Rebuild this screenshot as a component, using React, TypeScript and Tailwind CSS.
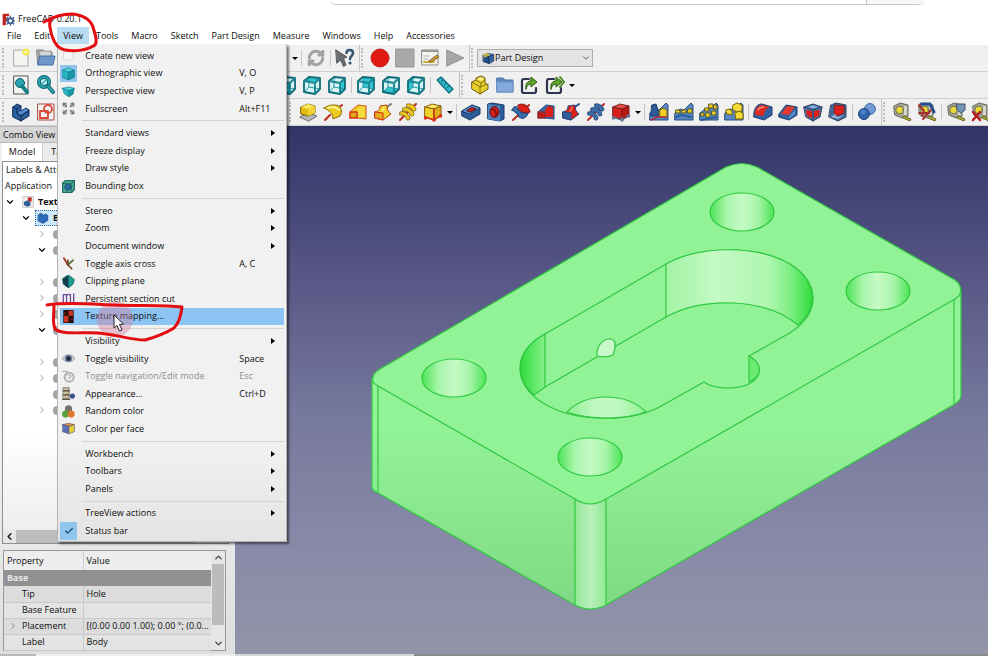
import type { ReactNode } from "react";
import { Check, ChevronDown, ChevronLeft, ChevronRight, ChevronUp, RefreshCw } from "lucide-react";

interface IconProps {
  children: ReactNode;
  size?: string;
}

const Icon = ({ children, size = "h-5 w-5" }: IconProps) => (
  <svg viewBox="0 0 20 20" className={`${size} shrink-0`} strokeLinejoin="round" strokeLinecap="round" fill="none">
    {children}
  </svg>
);

interface BoxProps {
  top: string;
  left: string;
  right: string;
  line: string;
}

const Box = ({ top, left, right, line }: BoxProps) => (
  <g stroke={line}>
    <path d="M2 5 L9 2 L18 4 L11 7 Z" fill={top} />
    <path d="M2 5 L11 7 L11 18 L2 15 Z" fill={left} />
    <path d="M11 7 L18 4 L18 14 L11 18 Z" fill={right} />
  </g>
);

const NewIcon = () => (
  <Icon>
    <path d="M3 2 H17 V18 H3 Z" fill="#f3f3f0" stroke="#a8a8a6" />
    <circle cx="15" cy="4" r="3.5" fill="#f4e64a" />
    <circle cx="15" cy="4" r="1.5" fill="#fffbc0" />
  </Icon>
);

const OpenIcon = () => (
  <Icon>
    <path d="M1 2 H7 L9 4 H16 V16 H2 Z" fill="#a9a9a7" stroke="#7f7f7d" />
    <path d="M4 3 H15 V9 H4 Z" fill="#d5d5d5" stroke="#999" />
    <path d="M4 8 H19 L17 17 H2 Z" fill="#6f97ca" stroke="#456fa6" />
  </Icon>
);

const PointerHelpIcon = () => (
  <Icon>
    <path d="M1 2 L12 9 L8.500 10.500 L11 17 L8.500 18.500 L5.500 12 L2 15 Z" fill="#6b6e70" stroke="#55585a" />
    <path d="M11.500 5 C11.500 1 18 1 18 5 C18 8 15 8 15 11" stroke="#33536f" strokeWidth="2.500" />
    <circle cx="15" cy="15" r="1.600" fill="#33536f" />
  </Icon>
);

const MacroEditIcon = () => (
  <Icon>
    <path d="M2 2 H18 V17 H2 Z" fill="#f2f2ee" stroke="#8b8b88" />
    <path d="M2 2 H18 V4 H2 Z" fill="#9c9a92" />
    <path d="M4 8 H9 M4 11 H8" stroke="#b0b0ae" />
    <path d="M4 14 H14" stroke="#c9b23a" strokeWidth="2" />
    <path d="M9 13 L17 7 L19 9 L11 14 Z" fill="#dba03a" stroke="#7b5a1e" />
  </Icon>
);

const FitAllIcon = () => (
  <Icon>
    <path d="M3 1 H17 V19 H3 Z" fill="#f4f4f2" stroke="#555" />
    <circle cx="9" cy="8" r="4.500" fill="#2aa7b0" stroke="#0c5c66" />
    <path d="M11 11 L16 17" stroke="#16808a" strokeWidth="4" />
  </Icon>
);

const ZoomIcon = () => (
  <Icon>
    <circle cx="8" cy="7" r="5" stroke="#0d6570" strokeWidth="4" fill="#d7f2f3" />
    <circle cx="8" cy="7" r="5" stroke="#29a5b0" strokeWidth="2" />
    <path d="M12 11 L17 17" stroke="#0d6570" strokeWidth="4" />
    <path d="M12 11 L17 17" stroke="#29a5b0" strokeWidth="2" />
    <path d="M6 9 L10 5" stroke="#29a5b0" strokeWidth="1.500" />
  </Icon>
);

const cubeFaces = {
  front: "M2 6 L13 8 V19 L2 17 Z",
  top: "M2 6 L7 2 L18 3 L13 8 Z",
  right: "M13 8 L18 3 V14 L13 19 Z",
  rear: "M7 2 L18 3 V14 L7 12 Z",
  bottom: "M2 17 L7 12 L18 14 L13 19 Z",
  left: "M2 6 L7 2 V12 L2 17 Z",
};

const CubeIcon = ({ face }: { face: keyof typeof cubeFaces }) => (
  <Icon>
    <path d="M2 6 L7 2 L18 3 V14 L13 19 L2 17 Z" fill="#d6f3f5" />
    <path d={cubeFaces[face]} fill="#2fc6d2" />
    <path d="M7 2 V12 L2 17 M7 12 L18 14" stroke="#2a9aa6" strokeWidth="1" />
    <path d="M2 6 L7 2 L18 3 V14 L13 19 L2 17 Z M2 6 L13 8 V19 M13 8 L18 3" stroke="#0f6b77" strokeWidth="1.800" />
    <path d="M2 6 L13 8 V19 M13 8 L18 3" stroke="#34c3cf" strokeWidth="0.600" />
  </Icon>
);

const RulerIcon = () => (
  <Icon>
    <path d="M2 5 L6 2 L18 14 L14 18 Z" fill="#2fb4c4" stroke="#0d6b7a" strokeWidth="1.200" />
    <path d="M8 5 L6.500 6.500 M11 8 L9.500 9.500 M14 11 L12.500 12.500" stroke="#0d4c5a" />
  </Icon>
);

const PartIcon = () => (
  <Icon>
    <path d="M2 7 L6 5 V3 L11 1 L15 3 V8 L18 10 V14 L10 19 L2 14 Z" fill="#e8cf2e" stroke="#6b5a0a" />
    <path d="M2 7 L10 12 V19 M10 12 L18 9 M6 5 L11 8 L15 5 M11 8 V12" stroke="#8a7410" />
    <path d="M7 4 L11 6 L14 4 L11 2 Z" fill="#fbf08a" />
  </Icon>
);

const GroupIcon = () => (
  <Icon>
    <path d="M2 3 H8 L10 5 H18 V17 H2 Z" fill="#5f88ba" stroke="#5377a8" />
    <path d="M2 7 H18 V17 H2 Z" fill="#84a9d8" stroke="#6d93c5" />
  </Icon>
);

const LinkIcon = ({ double = false }: { double?: boolean }) => (
  <Icon>
    <path d="M9 4 H4 Q2 4 2 6 V16 Q2 18 4 18 H14 Q16 18 16 16 V13" stroke="#2c3450" strokeWidth="2.200" />
    <path d="M6 14 C5 8 8 6 11 6 V2 L17 7 L11 12 V9 C8 9 7 11 6 14 Z" fill="#5fa52c" stroke="#2f5c11" />
    {double && <path d="M15 2 L19 7 L15 12" stroke="#4c8a22" strokeWidth="2" />}
  </Icon>
);

const BodyIcon = () => (
  <Icon>
    <path d="M2 5 L6 2 L10 4 V9 L15 6 L18 8 V14 L10 19 L2 15 Z" fill="#2c5f9e" stroke="#0e2c54" />
    <path d="M2 5 L6 7 V12 L10 14 V19 M6 7 L10 4 M10 14 L18 9" stroke="#0e2c54" />
    <path d="M7 11 L15 6.500 L17 8 L10 12.500 Z" fill="#5b90cf" />
  </Icon>
);

const SketchIcon = () => (
  <Icon>
    <path d="M2 2 H18 V18 H2 Z" fill="#f4f2f0" stroke="#a84a40" />
    <circle cx="12" cy="7" r="4" stroke="#d9483a" strokeWidth="1.800" />
    <path d="M4 9 H12 V16 H4 Z" stroke="#d9483a" strokeWidth="1.800" />
  </Icon>
);

const PadIcon = () => (
  <Icon>
    <path d="M2 15 L10 11 L19 14 L11 19 Z" fill="#b5b7b7" stroke="#6a6c6c" />
    <path d="M3 5 L10 2 L17 4 V11 L10 14 L3 12 Z" fill="#e2bd18" stroke="#7b6200" />
    <path d="M3 5 L10 2 L17 4 L10 7 Z" fill="#fbec5c" />
    <path d="M10 7 L17 4 V11 L10 14 Z" fill="#f2d534" />
  </Icon>
);

const RevolveIcon = () => (
  <Icon>
    <path d="M2 18 L7 13 M14 7 L19 3" stroke="#c4261b" strokeWidth="2" />
    <path d="M1 6 C5 3 11 2 16 4 C19 7 19 11 17 14 L10 17 C10 12 6 8 1 6 Z" fill="#ecc91f" stroke="#8a6c00" />
    <path d="M5 6 C9 4 13 5 16 8" stroke="#fbf08a" strokeWidth="2" />
  </Icon>
);

const LoftIcon = ({ sub = false }: { sub?: boolean }) => (
  <Icon>
    <path d="M3 9 L10 3 L18 4 V17 L9 16 Z" fill={sub ? "#3867a5" : "#ecc91f"} stroke={sub ? "#274a7c" : "#d0561a"} />
    <path d="M9 8 L12 4 L17 5 V15 L9 15 Z" fill={sub ? "#dc2018" : "#f5dc3e"} />
    <path d="M2 10 H9 V16 H2 Z" fill={sub ? "#c31c17" : "#e2aa17"} stroke={sub ? "#8e2a38" : "#d6301a"} strokeWidth="1.500" />
  </Icon>
);

const PipeIcon = ({ sub = false }: { sub?: boolean }) => (
  <Icon>
    <path d="M14 5 L18 2" stroke={sub ? "#26508b" : "#777"} strokeWidth="2" />
    <path d="M2 10 C6 9 7 7 7 4 L14 3 C14 7 15 10 18 12 L10 18 L2 16 Z" fill={sub ? "#dc2018" : "#f0cf29"} stroke={sub ? "#274a7c" : "#b3440f"} />
    <path d="M2 10 L10 11 V18 L2 16 Z" fill={sub ? "#30609f" : "#e4ae1c"} stroke={sub ? "#274a7c" : "#d6301a"} />
    <path d="M9 9 C11 8 11 7 11 5" stroke={sub ? "#f0766e" : "#fbf08a"} strokeWidth="1.500" />
  </Icon>
);

const HelixIcon = ({ sub = false }: { sub?: boolean }) => (
  <Icon>
    <path d="M2 18 L18 2" stroke="#c4261b" strokeWidth="2" />
    <g fill={sub ? "#3a6dac" : "#edc820"} stroke={sub ? "#1d3f70" : "#80600a"} strokeWidth="0.800">
      <path d="M2 10 C6 8 12 12 12 17 C10 19 8 18 8 16 C8 14 5 13 2 13 Z" />
      <path d="M5 6 C9 4 16 8 16 13 C14 15 12 14 12 12 C11 10 8 9 5 9 Z" />
      <path d="M9 2 C13 1 18 4 18 8 C16 10 15 9 14 8 C13 6 11 5 9 5 Z" />
    </g>
  </Icon>
);

const PrimitiveIcon = ({ sub = false }: { sub?: boolean }) => (
  <Icon>
    {sub ? (
      <Box top="#e8534a" left="#d4201a" right="#b51713" line="#7b1f1f" />
    ) : (
      <Box top="#fbec5c" left="#f0cf29" right="#e0ad18" line="#8a5a10" />
    )}
    <path d="M2 15 L11 18 L18 13 M11 15 V18" stroke={sub ? "#5d6a7d" : "#d6301a"} strokeWidth="1.500" />
    {!sub && <path d="M11 7 V18" stroke="#d6301a" strokeWidth="1.500" />}
    <circle cx="2.500" cy="16" r="1.800" fill={sub ? "#6b7a90" : "#d6301a"} />
    <circle cx="11" cy="18" r="1.800" fill={sub ? "#6b7a90" : "#d6301a"} />
    <circle cx="17.500" cy="14" r="1.800" fill={sub ? "#6b7a90" : "#d6301a"} />
  </Icon>
);

const PocketIcon = () => (
  <Icon>
    <path d="M1 9 L11 3 L19 6 V12 L9 18 L1 14 Z" fill="#2d5c99" stroke="#1c3c6c" />
    <path d="M1 9 L11 3 L19 6 L9 12 Z" fill="#5f92d0" stroke="#1c3c6c" />
    <path d="M6 8.500 L11 5.500 L15 7 L10 10 Z" fill="#d4201a" stroke="#4f1113" />
  </Icon>
);

const HoleIcon = () => (
  <Icon>
    <path d="M2 2 L6 1 L18 3 V17 L14 19 L2 17 Z" fill="#2d5c99" stroke="#1c3c6c" />
    <path d="M2 2 L14 4 V19 L2 17 Z" fill="#4f84c4" />
    <ellipse cx="8.500" cy="10" rx="4.500" ry="5.500" fill="#d4201a" stroke="#5b1113" />
    <path d="M6 7 C9 7 11 11 10 14" stroke="#84120e" strokeWidth="2" />
  </Icon>
);

const GrooveIcon = () => (
  <Icon>
    <path d="M2 18 L18 3" stroke="#c4261b" strokeWidth="2" />
    <path d="M7 3 C12 0 18 4 19 10 C16 13 11 10 8 8 Z" fill="#dc2018" stroke="#7b1a1a" />
    <path d="M1 8 C3 3 6 4 7 7 C9 11 13 12 17 11 C16 16 11 18 8 15 C7 12 4 10 1 8 Z" fill="#3a6dac" stroke="#1c3c6c" />
  </Icon>
);

const PatternIcon = ({ kind }: { kind: number }) => (
  <Icon>
    <path d="M1 11 L6 7 L10 8 L17 1 L19 3 V18 H1 Z" fill="#5688c6" stroke="#2b4d7c" />
    {kind === 0 && (
      <g>
        <path d="M3 3 L7 2 L9 8 L9 14 L2 14 Z" fill="#2d5c99" stroke="#1d3f6f" />
        <path d="M11 8 L14 6 L18 8 V15 L11 15 Z" fill="#f0cf29" stroke="#7a6200" />
        <path d="M2 18 L8 15 H17" stroke="#b52a3a" strokeWidth="1.500" />
      </g>
    )}
    {kind === 1 && (
      <g>
        <path d="M2 8 h4 v3 h-4 z M8 8 h4 v3 h-4 z M14 7 h4 v4 h-4 z" fill="#f0cf29" stroke="#5a5a20" />
        <path d="M2 15 L7 13 L17 15" stroke="#2d5c99" strokeWidth="2" />
      </g>
    )}
    {kind === 2 && (
      <g>
        <path d="M6 6 h4 v3 h-4 z M10 2 h4 v4 h-4 z M15 3 h3 v4 h-3 z M13 9 h4 v4 h-4 z M7 11 h4 v4 h-4 z M2 11 h3 v3 h-3 z" fill="#f0cf29" stroke="#5a5a20" />
        <path d="M2 18 L18 15" stroke="#2d5c99" strokeWidth="2" />
      </g>
    )}
    {kind === 3 && (
      <g fill="#f5da35" stroke="#7a6200">
        <path d="M9 3 L13 1 L18 3 V9 L13 10 L9 8 Z" />
        <path d="M11 11 L15 9 L19 11 V17 L12 17 Z" />
        <path d="M2 8 L5 7 L8 9 V13 L3 12 Z" />
      </g>
    )}
  </Icon>
);

const FilletIcon = () => (
  <Icon>
    <path d="M1 10 C2 5 5 2 9 2 L19 5 V13 L11 18 L1 15 Z" fill="#2f62a3" stroke="#1c3c6c" />
    <path d="M2 13 V10 C3 5 6 3 10 3 L17 5 C13 6 11 10 11 14 Z" fill="#dc2a20" />
    <path d="M5 8 C6 6 8 5 11 5" stroke="#f28a80" strokeWidth="1.500" />
  </Icon>
);

const ChamferIcon = () => (
  <Icon>
    <path d="M1 12 L8 3 L19 5 V13 L11 18 L1 15 Z" fill="#2f62a3" stroke="#1c3c6c" />
    <path d="M3 12 L9 4 L17 5 L11 13 Z" fill="#e4392e" />
    <path d="M11 15 L17 8 V12 L11 17 Z" fill="#5f92d0" />
  </Icon>
);

const DraftIcon = () => (
  <Icon>
    <path d="M1 5 L10 2 L19 5 L17 15 L10 19 L3 15 Z" fill="#4a71a8" stroke="#33445f" />
    <path d="M3 8 L9 9 V16 L4 14 Z M11 9 L17 8 L16 14 L11 16 Z" fill="#dc2018" />
    <path d="M1 5 L10 8 L19 5 M10 8 V19" stroke="#33445f" strokeWidth="1.200" />
    <path d="M5 5 L10 3.500 L15 5 L10 6.500 Z" fill="#8eb1dc" />
  </Icon>
);

const ThicknessIcon = () => (
  <Icon>
    <path d="M3 3 L8 1 L18 3 V15 L10 19 L1 15 Z" fill="#44699c" stroke="#33445f" />
    <path d="M7 3 L16 4 V11 L9 14 L6 11 Z" fill="#dc2018" stroke="#7b2424" />
    <path d="M3 15 L7 12 L9 15 L16 13 L10 17 Z" fill="#8eb1dc" />
  </Icon>
);

const BooleanIcon = () => (
  <Icon>
    <circle cx="13" cy="7" r="5.500" fill="#7299d6" stroke="#486cab" />
    <circle cx="7" cy="12" r="5.500" fill="#3265ac" stroke="#204781" />
    <circle cx="6" cy="10" r="2.500" fill="#4b82c8" />
  </Icon>
);

const MeasureIcon = ({ mark }: { mark?: string }) => (
  <Icon>
    <path d="M2 4 L8 1 L16 3 V14 L10 16 L3 13 Z" fill="#a3a396" stroke="#66675c" />
    <path d="M12 4 H15 V13 H12 Z" fill="#d6d6cf" />
    <circle cx="7.500" cy="8" r="3.800" fill="#e8da33" stroke="#66675c" />
    <path d="M12 14 L19 17 L18 19 L11 16 Z" fill="#b0b428" stroke="#666a2a" />
    {mark === "angle" && <path d="M4 2 H13 L17 10" stroke="#24518c" strokeWidth="3" />}
    {mark === "angle" && <path d="M2 3 L7 9 L5 14 M2 11 H12 M14 8 L6 17" stroke="#a3302c" strokeWidth="2" />}
    {mark === "toggle" && <path d="M11 2 H19 V8 L15 11 L11 8 Z" fill="#7392b8" stroke="#456" />}
    {mark === "clear" && <path d="M2 10 L9 18 M9 10 L2 18" stroke="#b81c1c" strokeWidth="2.500" />}
  </Icon>
);

const Grip = () => <span className="h-5 w-[6px] shrink-0 border-l-2 border-dotted border-[#bdbdbd]" />;
const Divider = ({ full = false }: { full?: boolean }) => (
  <span className={`flex w-1 shrink-0 justify-center ${full ? "h-full" : "h-4"}`}>
    <span className="w-px bg-[#c6c6c6]" />
  </span>
);

const Tool = ({ label, children }: { label: string; children: ReactNode }) => (
  <button aria-label={label} className="flex w-[25px] shrink-0 items-center justify-center">
    {children}
  </button>
);

const Caret = ({ label }: { label: string }) => (
  <button aria-label={label} className="flex w-[9px] shrink-0 items-center justify-center">
    <span className="border-x-3 border-t-3 border-x-transparent border-t-black" />
  </button>
);

const Toolbar = ({ label, children }: { label: string; children: ReactNode }) => (
  <div role="toolbar" aria-label={label} className="flex h-[27px] items-center overflow-hidden border-b border-[#cfcfcf] pl-[2px]">
    {children}
  </div>
);

const menuIcons: Record<string, ReactNode> = {
  newView: <path d="M3 3 H17 V17 H3 Z" fill="#f7f4f4" stroke="#d6cccc" />,
  ortho: (
    <g stroke="#0f7a89">
      <path d="M1 5 L10 1 L19 5 L10 8 Z" fill="#4bd3dd" />
      <path d="M1 5 L10 8 V20 L1 16 Z" fill="#25b5c3" />
      <path d="M10 8 L19 5 V16 L10 20 Z" fill="#1797a8" />
    </g>
  ),
  persp: (
    <g stroke="#0f7a89">
      <path d="M1 5 L10 3 L19 5 L11 9 Z" fill="#4bd3dd" />
      <path d="M1 5 L11 9 V18 L4 14 Z" fill="#25b5c3" />
      <path d="M11 9 L19 5 L17 14 L11 18 Z" fill="#1797a8" />
    </g>
  ),
  full: (
    <g>
      <path d="M1 1 H8 V8 H1 Z M12 1 H19 V8 H12 Z M1 12 H8 V19 H1 Z M12 12 H19 V19 H12 Z" fill="#b5b8ba" />
      <path d="M2 5 V2 H5 M2 2 L7 7 M18 5 V2 H15 M18 2 L13 7 M2 15 V18 H5 M2 18 L7 13 M18 15 V18 H15 M18 18 L13 13" stroke="#6f7478" strokeWidth="1.800" />
    </g>
  ),
  bbox: (
    <g>
      <path d="M1 5 L5 1 H19 V15 L15 19 H1 Z" fill="#56b09c" stroke="#1d6b61" strokeWidth="2" />
      <circle cx="9" cy="11" r="5" fill="#2a6f9b" stroke="#123e55" />
      <path d="M15 5 V19 M1 5 H15 L19 1" stroke="#1d6b61" strokeWidth="1.500" />
    </g>
  ),
  axis: (
    <g strokeWidth="3">
      <path d="M9 12 L3 2" stroke="#a3452f" />
      <path d="M9 12 L17 5" stroke="#5c7a3c" />
      <path d="M9 5 V12 L15 18" stroke="#6b3c22" strokeWidth="2.500" />
    </g>
  ),
  clip: (
    <g>
      <path d="M10 0 L19 7 L17 14 L10 20 L2 14 L1 6 Z" fill="#1b9c8c" stroke="#0d4a55" />
      <path d="M10 0 V20 L2 14 L1 6 Z" fill="#123f52" />
    </g>
  ),
  section: <path d="M2 17 V4 H7 V16 M7 4 H13 V17 H18 V3" stroke="#6a4a9c" strokeWidth="2" />,
  texture: (
    <g>
      <path d="M2 0 H18 V20 H2 Z" fill="#1c1010" />
      <path d="M10 1 H17 V9 H10 Z M3 9 H10 V19 H3 Z" fill="#d23222" />
      <path d="M3 3 H7 V7 H3 Z M13 12 H17 V16 H13 Z" fill="#5b1712" />
    </g>
  ),
  eye: (
    <g>
      <path d="M0 10 C5 2 15 2 20 10 C15 17 5 17 0 10 Z" fill="#ccd0da" stroke="#8a90a0" />
      <circle cx="10" cy="10" r="5" fill="#47597a" />
      <circle cx="10" cy="10" r="2.200" fill="#141a28" />
    </g>
  ),
  nav: (
    <g stroke="#b0b0b0" strokeWidth="3">
      <circle cx="11" cy="11" r="7" />
      <path d="M1 2 H8 V8 M11 7 C15 8 14 13 10 12" strokeWidth="2" />
    </g>
  ),
  appearance: (
    <g>
      <path d="M2 1 H11 V18 H2 Z" fill="#c9bf9f" stroke="#5b5340" />
      <path d="M2 6 H11 M2 12 H11" stroke="#4d4738" strokeWidth="2" />
      <circle cx="16" cy="14" r="4" fill="#39518c" />
      <path d="M1 19 H12" stroke="#555" strokeWidth="2" />
    </g>
  ),
  random: (
    <g>
      <circle cx="10" cy="6" r="5.500" fill="#75706c" />
      <circle cx="5.500" cy="14" r="5.500" fill="#56a53c" />
      <circle cx="14" cy="14" r="5.500" fill="#dd7830" />
    </g>
  ),
  face: (
    <g stroke="#5b5a65">
      <path d="M1 4 L10 2 L19 4 L11 7 Z" fill="#e0904b" />
      <path d="M1 4 L11 7 V18 L1 15 Z" fill="#5a70b8" />
      <path d="M11 7 L19 4 V15 L11 18 Z" fill="#e8d23b" />
    </g>
  ),
};

interface MenuEntry {
  label?: string;
  keys?: string;
  icon?: string;
  sub?: boolean;
  checked?: boolean;
  disabled?: boolean;
  active?: boolean;
}

const viewMenu: MenuEntry[] = [
  { label: "Create new view", icon: "newView" },
  { label: "Orthographic view", keys: "V, O", icon: "ortho", checked: true },
  { label: "Perspective view", keys: "V, P", icon: "persp" },
  { label: "Fullscreen", keys: "Alt+F11", icon: "full" },
  {},
  { label: "Standard views", sub: true },
  { label: "Freeze display", sub: true },
  { label: "Draw style", sub: true },
  { label: "Bounding box", icon: "bbox" },
  {},
  { label: "Stereo", sub: true },
  { label: "Zoom", sub: true },
  { label: "Document window", sub: true },
  { label: "Toggle axis cross", keys: "A, C", icon: "axis" },
  { label: "Clipping plane", icon: "clip" },
  { label: "Persistent section cut", icon: "section" },
  { label: "Texture mapping...", icon: "texture", active: true },
  {},
  { label: "Visibility", sub: true },
  { label: "Toggle visibility", keys: "Space", icon: "eye" },
  { label: "Toggle navigation/Edit mode", keys: "Esc", icon: "nav", disabled: true },
  { label: "Appearance...", keys: "Ctrl+D", icon: "appearance" },
  { label: "Random color", icon: "random" },
  { label: "Color per face", icon: "face" },
  {},
  { label: "Workbench", sub: true },
  { label: "Toolbars", sub: true },
  { label: "Panels", sub: true },
  {},
  { label: "TreeView actions", sub: true },
  { label: "Status bar", checked: true },
];

const ViewMenu = () => (
  <div
    role="menu"
    className="absolute left-0 top-[17px] z-20 flex h-[498px] w-[230px] flex-col border border-t-0 border-[#b4b4b4] bg-linear-to-b from-[#f1f1f1] from-80% to-[#e4e4e4] px-[2px] pb-px pt-[3px] shadow-[2px_2px_2px_rgba(0,0,0,0.5)]"
  >
    {viewMenu.map((entry, index) =>
      entry.label ? (
        <button
          role="menuitem"
          key={index}
          disabled={entry.disabled}
          className={`flex flex-1 items-center text-left ${entry.active ? "bg-[#8cc5f3]" : ""} ${entry.disabled ? "text-[#8e8e8e]" : ""}`}
        >
          <span className={`flex h-full w-[17px] items-center justify-center ${entry.checked ? "bg-[#90c5ee]" : ""}`}>
            {entry.icon && <Icon size="h-[13px] w-[13px]">{menuIcons[entry.icon]}</Icon>}
            {entry.checked && !entry.icon && <Check className="h-[10px] w-[10px] text-[#1d4b73]" strokeWidth={3} />}
          </span>
          <span className="w-[162px] whitespace-nowrap pl-2">{entry.label}</span>
          <span className="flex-1 whitespace-nowrap">{entry.keys}</span>
          {entry.sub && <span className="mr-[9px] border-y-3 border-l-4 border-y-transparent border-l-black" />}
        </button>
      ) : (
        <div key={index} className="flex h-[7px] items-center pl-[22px]">
          <span className="h-px w-full bg-[#d3d3d3]" />
        </div>
      )
    )}
  </div>
);

const menus = ["File", "Edit", "View", "Tools", "Macro", "Sketch", "Part Design", "Measure", "Windows", "Help", "Accessories"];

const MenuBar = () => (
  <nav className="flex h-[18px] items-center gap-px pl-px">
    {menus.map((menu) => (
      <div key={menu} className="relative flex h-full">
        <button className={`px-[6px] ${menu === "View" ? "bg-[#b9dcf2]" : ""}`}>{menu}</button>
        {menu === "View" && <ViewMenu />}
      </div>
    ))}
  </nav>
);

const Toolbars = () => (
  <div className="bg-[#f0f0f0]">
    <Toolbar label="File">
      <Grip />
      <Tool label="New"><NewIcon /></Tool>
      <Tool label="Open"><OpenIcon /></Tool>
      <span className="w-[232px] shrink-0" />
      <Caret label="Redo history" />
      <Divider />
      <Tool label="Refresh"><RefreshCw className="h-[18px] w-[18px] text-[#a2a2a2]" strokeWidth={4} /></Tool>
      <Divider />
      <Tool label="What's this?"><PointerHelpIcon /></Tool>
      <Divider full />
      <Grip />
      <Tool label="Record macro">
        <Icon><circle cx="10" cy="10" r="9" fill="#e01b12" stroke="#c2221a" /></Icon>
      </Tool>
      <Tool label="Stop macro">
        <Icon><path d="M1 1 H19 V19 H1 Z" fill="#a9a9a9" stroke="#979797" /></Icon>
      </Tool>
      <Tool label="Macros"><MacroEditIcon /></Tool>
      <Tool label="Run macro">
        <Icon><path d="M2 2 L19 10 L2 18 Z" fill="#a6a6a6" stroke="#949494" /></Icon>
      </Tool>
      <Divider full />
      <Grip />
      <label className="relative flex h-[18px] w-[116px] items-center border border-[#adadad] bg-[#e3e3e3]">
        <span className="absolute left-1 flex">
          <Icon size="h-[13px] w-[13px]">
            <Box top="#5f92d0" left="#23508b" right="#2f62a3" line="#12294d" />
            <path d="M1 4 L9 1 L12 5 L4 9 Z" fill="#b9b14a" />
          </Icon>
        </span>
        <select aria-label="Workbench" className="w-full appearance-none pl-[17px] outline-none">
          <option>Part Design</option>
        </select>
        <ChevronDown className="absolute right-[1px] h-[10px] w-[10px] text-[#444]" />
      </label>
    </Toolbar>
    <Toolbar label="View">
      <Grip />
      <Tool label="Fit all"><FitAllIcon /></Tool>
      <Tool label="Fit selection"><ZoomIcon /></Tool>
      <span className="w-[216px] shrink-0" />
      <Tool label="Front"><CubeIcon face="front" /></Tool>
      <Tool label="Top"><CubeIcon face="top" /></Tool>
      <Tool label="Right"><CubeIcon face="right" /></Tool>
      <Divider />
      <Tool label="Rear"><CubeIcon face="rear" /></Tool>
      <Tool label="Bottom"><CubeIcon face="bottom" /></Tool>
      <Tool label="Left"><CubeIcon face="left" /></Tool>
      <Divider />
      <Tool label="Measure distance"><RulerIcon /></Tool>
      <Divider full />
      <Grip />
      <Tool label="Create part"><PartIcon /></Tool>
      <Tool label="Create group"><GroupIcon /></Tool>
      <Tool label="Make link"><LinkIcon /></Tool>
      <Tool label="Make sub-link"><LinkIcon double /></Tool>
      <Caret label="Link actions" />
    </Toolbar>
    <Toolbar label="Part Design">
      <Grip />
      <Tool label="Create body"><BodyIcon /></Tool>
      <Tool label="Create sketch"><SketchIcon /></Tool>
      <span className="w-[231px] shrink-0" />
      <Grip />
      <Tool label="Pad"><PadIcon /></Tool>
      <Tool label="Revolution"><RevolveIcon /></Tool>
      <Tool label="Additive loft"><LoftIcon /></Tool>
      <Tool label="Additive pipe"><PipeIcon /></Tool>
      <Tool label="Additive helix"><HelixIcon /></Tool>
      <Tool label="Additive primitive"><PrimitiveIcon /></Tool>
      <Caret label="Additive primitives" />
      <Divider />
      <Tool label="Pocket"><PocketIcon /></Tool>
      <Tool label="Hole"><HoleIcon /></Tool>
      <Tool label="Groove"><GrooveIcon /></Tool>
      <Tool label="Subtractive loft"><LoftIcon sub /></Tool>
      <Tool label="Subtractive pipe"><PipeIcon sub /></Tool>
      <Tool label="Subtractive helix"><HelixIcon sub /></Tool>
      <Tool label="Subtractive primitive"><PrimitiveIcon sub /></Tool>
      <Caret label="Subtractive primitives" />
      <Divider />
      <Tool label="Mirrored"><PatternIcon kind={0} /></Tool>
      <Tool label="Linear pattern"><PatternIcon kind={1} /></Tool>
      <Tool label="Polar pattern"><PatternIcon kind={2} /></Tool>
      <Tool label="MultiTransform"><PatternIcon kind={3} /></Tool>
      <Divider />
      <Tool label="Fillet"><FilletIcon /></Tool>
      <Tool label="Chamfer"><ChamferIcon /></Tool>
      <Tool label="Draft"><DraftIcon /></Tool>
      <Tool label="Thickness"><ThicknessIcon /></Tool>
      <Divider />
      <Tool label="Boolean operation"><BooleanIcon /></Tool>
      <Divider full />
      <Grip />
      <Tool label="Measure linear"><MeasureIcon /></Tool>
      <Tool label="Measure angular"><MeasureIcon mark="angle" /></Tool>
      <Divider />
      <Tool label="Toggle measurements"><MeasureIcon mark="toggle" /></Tool>
      <Tool label="Clear measurements"><MeasureIcon mark="clear" /></Tool>
    </Toolbar>
  </div>
);

// expander shown in front of each feature, "" for a leaf
const treeRows = ["closed", "open", "", "closed", "closed", "closed", "open", "", "closed", "closed", "", "closed"];

const ModelTree = () => (
  <div className="ml-[2px] mr-[6px] flex h-[383px] flex-col border border-[#8f8f8f] bg-linear-to-b from-white from-70% to-[#ececec]">
    <div className="flex h-4 items-center whitespace-nowrap pl-[3px]">Labels &amp; Attributes</div>
    <div className="flex h-4 items-center pl-[2px]">Application</div>
    <ul>
      <li className="flex h-4 items-center gap-1 pl-[2px] font-bold">
        <ChevronDown className="h-[10px] w-[10px]" strokeWidth={3} />
        <span className="ml-[3px] flex">
          <Icon size="h-3 w-3">
            <path d="M1 1 H19 V19 H1 Z" fill="#f0eded" stroke="#b0a8a8" />
            <path d="M3 10 L9 7 L14 10 V16 L9 18 L3 15 Z" fill="#2c5f9e" />
            <path d="M9 3 L16 2 V9 L11 9 Z" fill="#c12a24" />
          </Icon>
        </span>
        <span>Texture</span>
      </li>
      <li className="flex h-4 items-center gap-1 pl-[18px]">
        <ChevronDown className="h-[10px] w-[10px]" strokeWidth={3} />
        <span className="flex h-4 w-12 items-center gap-1 border border-dotted border-[#2f6ea8] bg-[#cde8fb] pl-px font-bold">
          <Icon size="h-3 w-3">
            <path d="M2 5 L6 2 L10 4 V6 L15 3 L18 6 V14 L10 19 L2 15 Z" fill="#2c6cb8" stroke="#16437b" />
          </Icon>
          <span>Body</span>
        </span>
      </li>
      {treeRows.map((state, index) => (
        <li key={index} className="flex h-4 items-center gap-1 pl-[34px]">
          {state === "open" && <ChevronDown className="h-[10px] w-[10px]" strokeWidth={3} />}
          {state === "closed" && <ChevronRight className="h-[10px] w-[10px] text-[#8a8a8a]" strokeWidth={2} />}
          {state === "" && <span className="h-[10px] w-[10px]" />}
          <span className={`ml-[2px] h-[9px] w-[9px] rounded-sm ${index === 2 || index === 7 ? "" : "bg-[#a6a6a6]"}`} />
        </li>
      ))}
    </ul>
    <div className="mt-auto flex h-[13px] items-center bg-[#e6e6e6]">
      <ChevronLeft className="mx-[1px] h-[11px] w-[11px]" strokeWidth={3} />
      <span className="h-full w-[180px] bg-[#bdbdbd]" />
    </div>
  </div>
);

const properties = [
  { name: "Tip", value: "Hole" },
  { name: "Base Feature", value: "" },
  { name: "Placement", value: "[(0.00 0.00 1.00); 0.00 °; (0.0...", expand: true },
  { name: "Label", value: "Body" },
];

const PropertyPanel = () => (
  <div className="ml-[3px] mr-[9px] mt-[6px] flex h-[101px] border border-[#999]">
    <table className="min-w-0 flex-1 border-collapse self-start text-left">
      <thead>
        <tr className="h-[19px] bg-[#ededed]">
          <th className="w-[79px] border-r border-[#cfcfcf] p-0 pl-[3px] font-normal">Property</th>
          <th className="p-0 pl-[3px] font-normal">Value</th>
        </tr>
      </thead>
      <tbody>
        <tr className="h-4 bg-[#919191]">
          <th colSpan={2} className="p-0 pl-[3px] font-bold text-[#e8e8e8]">Base</th>
        </tr>
        {properties.map((row) => (
          <tr key={row.name} className="h-4 border-b border-[#c9c9c9] odd:bg-[#e3e3e3] even:bg-[#dcdcdc]">
            <th className="whitespace-nowrap border-r border-[#c9c9c9] p-0 font-normal">
              <span className="flex items-center">
                <span className="flex w-[18px] justify-center">
                  {row.expand && <ChevronRight className="h-[10px] w-[10px] text-[#777]" />}
                </span>
                {row.name}
              </span>
            </th>
            <td className="whitespace-nowrap p-0 pl-[3px]">{row.value}</td>
          </tr>
        ))}
      </tbody>
    </table>
    <div className="flex w-[14px] shrink-0 flex-col items-center bg-[#e6e6e6]">
      <ChevronUp className="my-[1px] h-[11px] w-[11px] text-[#444]" strokeWidth={3} />
      <span className="w-3 flex-1 bg-[#bcbcbc]" />
      <ChevronDown className="mb-[1px] mt-[13px] h-[11px] w-[11px] text-[#444]" strokeWidth={3} />
    </div>
  </div>
);

const ComboView = () => (
  <aside className="flex w-[235px] shrink-0 flex-col bg-linear-to-b from-[#f0f0f0] from-60% to-[#dedede]">
    <div className="flex h-[17px] items-center border-y border-[#b9b9b9] bg-[#d6d6d6] pl-[3px]">Combo View</div>
    <div role="tablist" className="flex h-[18px]">
      <button role="tab" aria-selected="true" className="ml-[2px] w-[41px] border-r border-[#cfcfcf] bg-white">Model</button>
      <button role="tab" aria-selected="false" className="w-10 bg-[#ebebeb]">Tasks</button>
    </div>
    <ModelTree />
    <PropertyPanel />
    <div className="mt-auto flex h-[2px]">
      <span className="w-9 bg-[#bbb]" />
      <span className="flex-1 bg-[#eee]" />
    </div>
  </aside>
);

const holes = [
  { cx: 454, cy: 378 },
  { cx: 742, cy: 212 },
  { cx: 878, cy: 291 },
  { cx: 590, cy: 457 },
];

const Viewport = () => (
  <main className="flex min-w-0 flex-1 flex-col">
    <svg viewBox="235 126 753 528" preserveAspectRatio="xMidYMid slice" className="min-h-0 w-full flex-1" role="img" aria-label="Part model">
      <defs>
        <linearGradient id="sky" x1="0" y1="0" x2="0" y2="1">
          <stop offset="0" stopColor="#303566" />
          <stop offset="0.280" stopColor="#575685" />
          <stop offset="0.550" stopColor="#77799d" />
          <stop offset="0.800" stopColor="#898aa8" />
          <stop offset="1" stopColor="#9294a8" />
        </linearGradient>
        <linearGradient id="side" x1="0" y1="290" x2="0" y2="610" gradientUnits="userSpaceOnUse">
          <stop offset="0.450" stopColor="#92f296" />
          <stop offset="1" stopColor="#7fd984" />
        </linearGradient>
        <linearGradient id="bore">
          <stop offset="0" stopColor="#4be455" />
          <stop offset="0.250" stopColor="#a5f5a8" />
          <stop offset="0.500" stopColor="#c6fac6" />
          <stop offset="0.750" stopColor="#a5f5a8" />
          <stop offset="1" stopColor="#4be455" />
        </linearGradient>
        <linearGradient id="sink">
          <stop offset="0" stopColor="#8df092" />
          <stop offset="0.350" stopColor="#c0f9c1" />
          <stop offset="0.650" stopColor="#c0f9c1" />
          <stop offset="1" stopColor="#8df092" />
        </linearGradient>
        <linearGradient id="wall">
          <stop offset="0" stopColor="#a2f4a5" />
          <stop offset="0.350" stopColor="#c4f9c5" />
          <stop offset="0.700" stopColor="#aef6b0" />
          <stop offset="0.850" stopColor="#7eee84" />
          <stop offset="1" stopColor="#2fdc3c" />
        </linearGradient>
        <linearGradient id="cove">
          <stop offset="0" stopColor="#2fdc3c" />
          <stop offset="1" stopColor="#86f08b" />
        </linearGradient>
        <linearGradient id="corner">
          <stop offset="0" stopColor="#90e894" />
          <stop offset="0.500" stopColor="#b9efbb" />
          <stop offset="1" stopColor="#92e996" />
        </linearGradient>
      </defs>
      <path d="M235 126 H988 V654 H235 Z" fill="url(#sky)" />
      <g stroke="#2fc840" strokeWidth="1.200" strokeLinejoin="round">
        <path d="M372 378 V488 Q373 491 378 493 L575 605 Q590 613 606 605 L955 404 Q961 400 961 396 V290 L590 504 Z" fill="url(#side)" />
        <path d="M575 499 V605 Q590 613 606 605 V499 Q590 508 575 499 Z" fill="url(#corner)" />
        <path d="M378 386 V493 M954 299 V404" />
        <path d="M373 382 Q371 374 380 369 L726 167 Q742 160 757 167 L955 280 Q964 287 959 296 L955 299 L606 499 Q590 509 575 499 L378 386 Q374 384 373 382 Z" fill="#92f296" />
        <path d="M545 334 C512 352 512 383 543 403 C575 423 633 423 663 405 L704 382 C715 390 741 390 752 382 C763 375 760 363 749 356 L788 334 C821 314 821 284 790 264 C757 245 700 245 666 264 Z" fill="#92f296" />
        <path d="M666 264 C700 245 757 245 790 264 C818 282 819 307 798 325 C764 297 702 297 666 317 Z" fill="url(#wall)" />
        <path d="M545 334 C516 350 513 376 534 395 L545 387 Z" fill="url(#cove)" />
        <path d="M545 387 L666 317" />
        <path d="M749 356 V382 C763 376 763 364 749 356 Z" fill="#6aea71" />
        <path d="M567 412 C586 392 626 392 646 412 C623 420 590 420 567 412 Z" fill="url(#sink)" />
        <path d="M597 356 C596 347 602 340 608 339 C613 338 616 341 615 347 C615 351 613 353 613 355 Q607 358 597 356 Z" fill="#c6f9c7" />
        {holes.map((hole) => (
          <ellipse key={hole.cx} cx={hole.cx} cy={hole.cy} rx="32" ry="19" fill="url(#bore)" />
        ))}
      </g>
    </svg>
    <div className="flex h-[2px] shrink-0 bg-[#8a8a8a]">
      <span className="w-[179px] bg-[#d8d8d8]" />
    </div>
  </main>
);

// hand-drawn marks and the mouse pointer, on top of the whole window
const Markup = () => (
  <svg viewBox="0 0 300 350" className="pointer-events-none absolute left-0 top-0 z-30 h-[350px] w-[300px]" fill="none">
    <circle cx="115" cy="319" r="18" fill="#d07a9c" fillOpacity="0.400" />
    <g stroke="#e30d12" strokeWidth="3" strokeLinecap="round" strokeLinejoin="round">
      <path d="M44 22 C51 18 62 14 72 14 C84 15 90 19 93 27 C95 34 98 41 95 45 C88 50 75 52 65 50 C57 49 54 42 52 36 C50 28 48 22 52 18" />
      <path d="M47 305 C65 302 90 304 115 305 C140 306 165 305 182 307 C181 316 179 323 174 328 C166 333 156 337 145 340 C130 340 115 334 98 333 C80 332 62 335 55 329 C52 321 54 314 54 306" />
    </g>
    <path d="M114 315 V328 L117 325.500 L119.500 331 L122 330 L119.500 324.500 L123.500 324 Z" fill="#fff" stroke="#222" />
  </svg>
);

export default function App() {
  return (
    <div className="relative flex h-screen flex-col overflow-hidden bg-white font-['Open_Sans','Noto_Sans',sans-serif] text-[9px] leading-[14px] text-[#0c0c0c]">
      <div className="flex h-[11px] items-start pl-[330px] pr-[64px]">
        <span className="flex h-[5px] flex-1 justify-end overflow-hidden rounded-b-full border-b border-[#c8c8c8]">
          <span className="w-[58px] border-l border-[#c8c8c8] bg-[#f7f7f7]" />
        </span>
      </div>
      <header className="flex h-4 items-center gap-[3px] pl-[2px]">
        <Icon size="h-[13px] w-[13px]">
          <path d="M1 1 H11 V5 H6 V8 H10 V12 H6 V19 H1 Z" fill="#c3211c" />
          <circle cx="13" cy="12" r="4" stroke="#3f6395" strokeWidth="3" />
          <path d="M13 5 V7 M13 17 V19 M6 12 H8 M18 12 H20 M8 7 L9 8 M17 16 L18 17 M18 7 L17 8 M9 16 L8 17" stroke="#3f6395" strokeWidth="2" />
        </Icon>
        <h1>FreeCAD 0.20.1</h1>
      </header>
      <MenuBar />
      <Toolbars />
      <div className="flex min-h-0 flex-1">
        <ComboView />
        <Viewport />
      </div>
      <Markup />
    </div>
  );
}
